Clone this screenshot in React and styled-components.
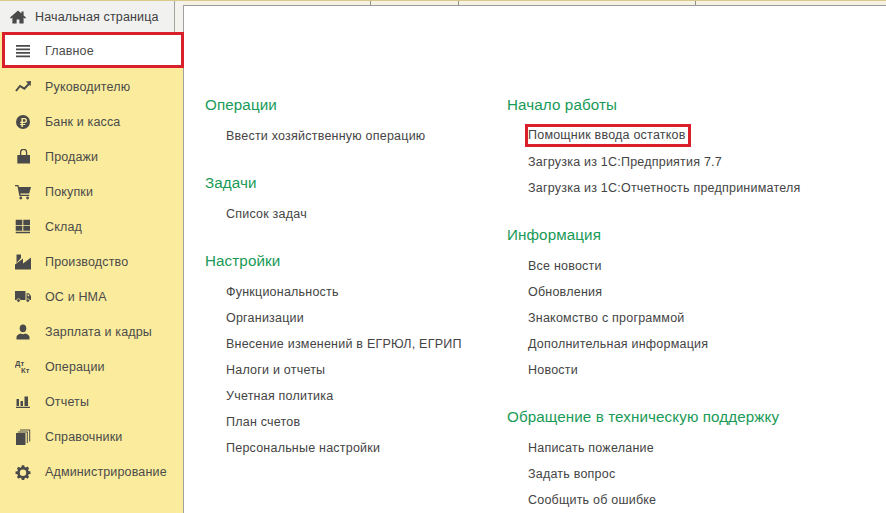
import React from 'react';
import styled, { createGlobalStyle } from 'styled-components';

const Global = createGlobalStyle`
  html, body { margin: 0; padding: 0; background: #fff; }
  body { font-family: "Liberation Sans", Arial, sans-serif; }
`;

const Page = styled.div`
  display: flex;
  width: 886px;
  height: 513px;
  overflow: hidden;
  background: #fbec9d;
`;

const Sidebar = styled.nav`
  width: 183px;
  flex: none;
  display: flex;
  flex-direction: column;
  background: #fbec9d;
`;

const HomeBar = styled.div`
  height: 32px;
  flex: none;
  background: #f3f2ec;
  border-top: 1px solid #d9c98a;
  box-sizing: border-box;
`;

const HomeTab = styled.div`
  height: 100%;
  width: 175px;
  display: flex;
  align-items: center;
  gap: 9px;
  padding-left: 10px;
  box-sizing: border-box;
  background: #f1f1f0;
  border-right: 1px solid #a3a39c;
  font-size: 12.5px;
  letter-spacing: 0.15px;
  color: #404040;
`;

const MenuItem = styled.div`
  height: 35px;
  flex: none;
  display: flex;
  align-items: center;
  padding-left: 15px;
  box-sizing: border-box;
  font-size: 12.5px;
  letter-spacing: 0.15px;
  color: #4a4a4a;
`;

const ActiveItem = styled(MenuItem)`
  position: relative;
  z-index: 1;
  width: 182px;
  height: 36px;
  margin: 0 0 1px 2px;
  padding: 1px 0 0 10px;
  background: #fff;
  border: 3px solid #d91f2a;
`;

const IconSlot = styled.span`
  width: 16px;
  height: 16px;
  flex: none;
  margin-right: ${p => (p.$tight ? '0' : '14px')};
  display: block;
  color: #4a4a4a;
  svg { display: block; width: 16px; height: 16px; fill: currentColor; }
`;

const Main = styled.main`
  flex: 1;
  display: flex;
  flex-direction: column;
  min-width: 0;
`;

const TabStrip = styled.div`
  height: 5px;
  flex: none;
  box-sizing: border-box;
  background: #f5f2e4;
  border-top: 1px solid #d9c98a;
  display: flex;
`;

const TabCell = styled.div`
  width: ${p => p.$w}px;
  flex: none;
  box-sizing: border-box;
  border-right: 1px solid #8f8f8f;
`;

const Panel = styled.div`
  flex: 1;
  background: #fff;
  border-top: 1px solid #9c9c9c;
  border-left: 1px solid #a0a0a0;
  box-sizing: border-box;
  display: flex;
  padding: 87px 0 0 21px;
  min-height: 0;
`;

const Column = styled.div`
  width: ${p => p.$w}px;
  flex: none;
`;

const Group = styled.section`
  margin-bottom: 22px;
`;

const Heading = styled.h2`
  margin: 0 0 6px;
  height: 24px;
  line-height: 24px;
  font-size: 15.2px;
  font-weight: 400;
  letter-spacing: 0.1px;
  color: #199a57;
`;

const LinkRow = styled.div`
  height: 26px;
  line-height: 26px;
  padding-left: 21px;
  font-size: 12.5px;
  letter-spacing: 0.22px;
  color: #444;
  white-space: nowrap;
`;

const Marked = styled.span`
  display: inline-block;
  position: relative;
  top: -1px;
  line-height: 17px;
  margin-left: -3px;
  padding-right: 2px;
  border: 3px solid #d91f2a;
  vertical-align: middle;
`;

const DtKtLabel = styled.svg`
  text { font-family: "Liberation Sans", Arial, sans-serif; font-size: 7.5px; font-weight: 700; fill: #4a4a4a; }
`;

const icons = {
  home: <path d="M8 1.5 0 8.6l1 1.1L2.4 8.5V14.5h4.2v-4h2.8v4h4.2V8.5l1.4 1.2 1-1.1-2.4-2.2V2.6h-2.2v1.9z" />,
  main: <path d="M1 2h14v1.8H1zM1 5.5h14v1.8H1zM1 9h14v1.8H1zM1 12.5h14v1.8H1z" />,
  trend: (
    <>
      <path d="M1 12 5 7l4.3 2.7L14 4.7" fill="none" stroke="currentColor" strokeWidth="2" />
      <path d="M10.8 2.4 16 2l-.4 5.2z" />
    </>
  ),
  bank: <path fillRule="evenodd" d="M8 1a7 7 0 1 0 0 14A7 7 0 0 0 8 1zM6.4 4h3.1a2.5 2.5 0 0 1 0 5H7.9v.9h2.4V11H7.9v2H6.4v-2H5.2V9.9h1.2V9H5.2V7.8h1.2zM7.9 5.3v2.5h1.5a1.25 1.25 0 0 0 0-2.5z" />,
  bag: (
    <>
      <path d="M2.3 6h12.7v8.5H2.3z" />
      <path d="M5.6 8V3.3a3 3 0 0 1 6 0V8" fill="none" stroke="currentColor" strokeWidth="1.3" />
    </>
  ),
  cart: (
    <>
      <path d="M0 1h3.4l.6 2H16l-1.8 6.6H5.4l.2 1.2h8.6V12H4.4L2.5 2.2H0z" />
      <circle cx="5.8" cy="14" r="1.4" />
      <circle cx="12.6" cy="14" r="1.4" />
    </>
  ),
  stock: <path d="M.7.7h6.6V6H.7zM8.3.7H15V6H8.3zM.7 6.8h6.6v4.9H.7zM8.3 6.8H15v4.9H8.3zM.7 12.7H15v1.6H.7z" />,
  factory: <path d="M1.5.5H6V4L1.5 9zM0 10.5l8-6v5l8-6v12H0z" />,
  truck: (
    <>
      <path fillRule="evenodd" d="M0 2h10.5v9H0zM11.5 4.2h2.4L16 7v4h-4.5zM12.6 5.2V7.2h2L13.4 5.2z" />
      <circle cx="3.5" cy="11.5" r="1.8" stroke="#fbec9d" strokeWidth="0.7" />
      <circle cx="12.8" cy="11.5" r="1.8" stroke="#fbec9d" strokeWidth="0.7" />
    </>
  ),
  person: (
    <>
      <ellipse cx="8" cy="4.3" rx="3.3" ry="3.9" />
      <path d="M1.5 15.5V13c0-2 2.6-3 4.2-3.5 1.2.9 3.4.9 4.6 0 1.6.5 4.2 1.5 4.2 3.5v2.5z" />
    </>
  ),
  reports: <path d="M1.5 5H4v7H1.5zM5.5 7H8v5H5.5zM9.5 2.5h3.5V12H9.5zM1 12.8h14V14H1z" />,
  books: <path d="M1 4h9.5v12H1zM3 2.5h9.8V14h-1V3.5H3zM5 .5h10.2v12h-1V1.5H5z" />,
  gear: <path fillRule="evenodd" d="M6.8 1.2h2.4l.4 1.9 1.2.5 1.6-1 1.7 1.7-1 1.6.5 1.2 1.9.4v2.4l-1.9.4-.5 1.2 1 1.6-1.7 1.7-1.6-1-1.2.5-.4 1.9H6.8l-.4-1.9-1.2-.5-1.6 1-1.7-1.7 1-1.6-.5-1.2L.5 10V7.6l1.9-.4.5-1.2-1-1.6 1.7-1.7 1.6 1 1.2-.5zM8 5.6a3.2 3.2 0 1 0 0 6.4A3.2 3.2 0 0 0 8 5.6z" />,
};

const Icon = ({ name, tight }) => (
  <IconSlot $tight={tight}>
    {name === 'dtkt' ? (
      <DtKtLabel viewBox="0 0 16 16">
        <text x="0" y="7">Дт</text>
        <text x="6" y="14">Кт</text>
      </DtKtLabel>
    ) : (
      <svg viewBox="0 0 16 16">{icons[name]}</svg>
    )}
  </IconSlot>
);

const menu = [
  ['trend', 'Руководителю'],
  ['bank', 'Банк и касса'],
  ['bag', 'Продажи'],
  ['cart', 'Покупки'],
  ['stock', 'Склад'],
  ['factory', 'Производство'],
  ['truck', 'ОС и НМА'],
  ['person', 'Зарплата и кадры'],
  ['dtkt', 'Операции'],
  ['reports', 'Отчеты'],
  ['books', 'Справочники'],
  ['gear', 'Администрирование'],
];

const left = [
  ['Операции', ['Ввести хозяйственную операцию']],
  ['Задачи', ['Список задач']],
  ['Настройки', ['Функциональность', 'Организации', 'Внесение изменений в ЕГРЮЛ, ЕГРИП', 'Налоги и отчеты', 'Учетная политика', 'План счетов', 'Персональные настройки']],
];

const right = [
  ['Начало работы', [['Помощник ввода остатков'], 'Загрузка из 1С:Предприятия 7.7', 'Загрузка из 1С:Отчетность предпринимателя']],
  ['Информация', ['Все новости', 'Обновления', 'Знакомство с программой', 'Дополнительная информация', 'Новости']],
  ['Обращение в техническую поддержку', ['Написать пожелание', 'Задать вопрос', 'Сообщить об ошибке']],
];

const Groups = ({ data }) =>
  data.map(([title, links]) => (
    <Group key={title}>
      <Heading>{title}</Heading>
      {links.map(l =>
        Array.isArray(l) ? (
          <LinkRow key={l[0]}><Marked>{l[0]}</Marked></LinkRow>
        ) : (
          <LinkRow key={l}>{l}</LinkRow>
        )
      )}
    </Group>
  ));

export default function App() {
  return (
    <Page>
      <Global />
      <Sidebar>
        <HomeBar>
          <HomeTab>
            <Icon name="home" tight />
            Начальная страница
          </HomeTab>
        </HomeBar>
        <ActiveItem>
          <Icon name="main" />
          Главное
        </ActiveItem>
        {menu.map(([icon, label]) => (
          <MenuItem key={label}>
            <Icon name={icon} />
            {label}
          </MenuItem>
        ))}
      </Sidebar>
      <Main>
        <TabStrip>
          <TabCell $w={188} />
          <TabCell $w={88} />
          <TabCell $w={237} />
        </TabStrip>
        <Panel>
          <Column $w={302}><Groups data={left} /></Column>
          <Column $w={378}><Groups data={right} /></Column>
        </Panel>
      </Main>
    </Page>
  );
}
